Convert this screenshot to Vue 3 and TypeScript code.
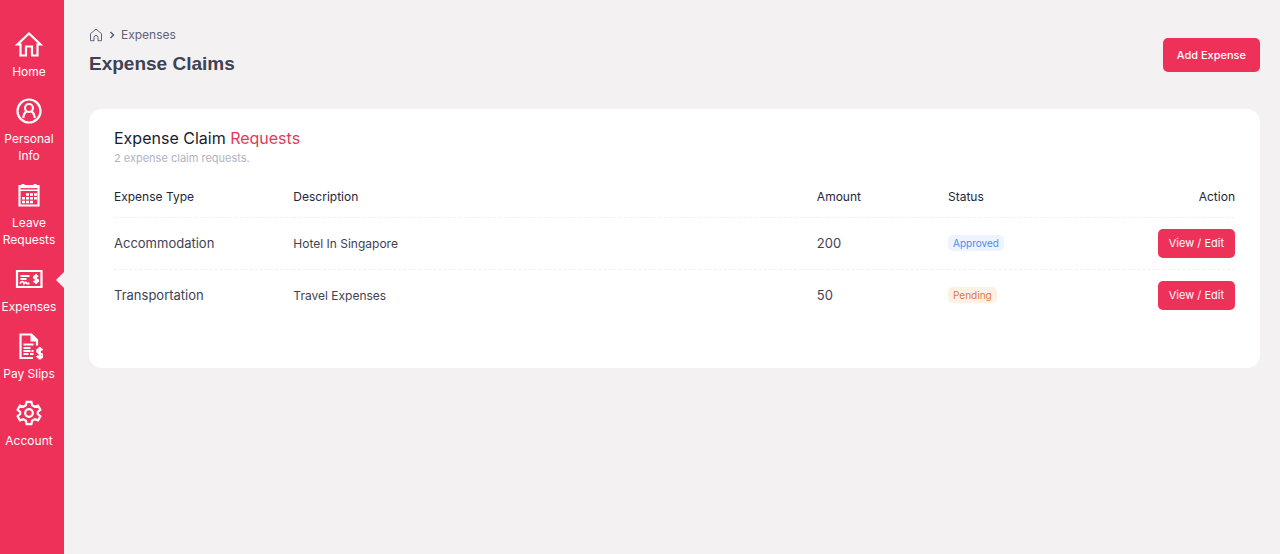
<script setup lang="ts">
type IconName = 'home' | 'person' | 'calendar' | 'cheque' | 'payslip' | 'gear'

interface NavItem {
  icon: IconName
  label: string
  active?: boolean
}

interface Claim {
  type: string
  description: string
  amount: number
  status: 'Approved' | 'Pending'
}

const navItems: NavItem[] = [
  { icon: 'home', label: 'Home' },
  { icon: 'person', label: 'Personal Info' },
  { icon: 'calendar', label: 'Leave Requests' },
  { icon: 'cheque', label: 'Expenses', active: true },
  { icon: 'payslip', label: 'Pay Slips' },
  { icon: 'gear', label: 'Account' },
]

const claims: Claim[] = [
  { type: 'Accommodation', description: 'Hotel In Singapore', amount: 200, status: 'Approved' },
  { type: 'Transportation', description: 'Travel Expenses', amount: 50, status: 'Pending' },
]
</script>

<template>
  <div class="shell">
    <nav class="sidebar" aria-label="Main">
      <a
        v-for="item in navItems"
        :key="item.label"
        href="#"
        class="nav-item"
        :class="{ active: item.active }"
        :aria-current="item.active ? 'page' : undefined"
      >
        <svg class="nav-icon" viewBox="0 0 28 28" aria-hidden="true">
          <g v-if="item.icon === 'home'" class="line">
            <path d="M5.500 14.500H2.500L14 3.500l11.500 11h-3" />
            <path d="M5.500 13.500V25.500H11V16.500h6v9h5.500V13.500" />
          </g>
          <g v-else-if="item.icon === 'person'" class="line">
            <circle cx="14" cy="14" r="11.500" />
            <circle cx="14" cy="11" r="4" />
            <path d="M8.300 21c.2-3.300 1.200-5.300 3.200-6.500M19.700 21c-.2-3.300-1.200-5.300-3.200-6.500" />
          </g>
          <g v-else-if="item.icon === 'calendar'">
            <path class="line" d="M4.500 5h19v19.500h-19z" />
            <path class="solid" d="M4 4h20v6H4z" />
            <path class="cut" d="M5.500 7.800h17" />
            <path class="solid" d="M6.500 3h3v3h-3zM18.500 3h3v3h-3z" />
            <path class="dots" d="M11 13.500h11M7 17.300h15M7 21h11" />
          </g>
          <g v-else-if="item.icon === 'cheque'">
            <path class="line" d="M2 6h24.500v16H2z" />
            <path class="thin" d="M5.500 11h9M5.500 14h6M5 18.500c2-3 3.500-2 4 0 1-1.500 2-1.200 3 0h2.500" />
            <path class="bold" d="M23 11.900c-1-1.400-4.200-1.300-4.200.4 0 2 4.400 1.300 4.400 3.300 0 1.800-3.500 1.800-4.600.3M21 9v10" />
          </g>
          <g v-else-if="item.icon === 'payslip'">
            <path class="line" d="M18 26H5.500V2.500h11l5.500 5.500v5.500" />
            <path class="solid" d="M15.500 2v7.500H23z" />
            <path class="thin" d="M8.500 12.500h10M8.500 16h7M8.500 19h7M8.500 22h5M16.500 19h2M15 22h3.500" />
            <path class="line" d="M27.600 18.300c-1.400-2-5.400-1.600-5.400.6 0 3 5.500 1.800 5.500 4.700 0 2.500-4.500 2.600-5.800.3M24.800 15v12.500" />
          </g>
          <g v-else class="line">
            <circle cx="14" cy="14" r="3.800" />
            <path d="M11.600 2.800h4.800l.7 3.400 2.600 1.500 3.300-1.100 2.400 4.100-2.600 2.300v2l2.600 2.300-2.400 4.100-3.300-1.100-2.600 1.500-.7 3.400h-4.800l-.7-3.400-2.600-1.500L5 21.400l-2.400-4.100L5.200 15v-2l-2.600-2.300L5 6.600l3.300 1.100 2.600-1.500z" />
          </g>
        </svg>
        <span class="nav-label">{{ item.label }}</span>
      </a>
    </nav>

    <main class="content">
      <header class="page-head">
        <div>
          <div class="crumbs">
            <a href="#" class="crumb-home" aria-label="Home">
              <svg viewBox="0 0 14 14" aria-hidden="true">
                <path d="M1.500 5.700 7 1l5.500 4.700v7H9V9.500a2 2 0 0 0-4 0v3.200H1.500z" />
              </svg>
            </a>
            <svg class="chevron" viewBox="0 0 6 8" aria-hidden="true"><path d="m1.500 1 3 3-3 3" /></svg>
            <span>Expenses</span>
          </div>
          <h1>Expense Claims</h1>
        </div>
        <button type="button" class="btn btn-large">Add Expense</button>
      </header>

      <section class="card">
        <h2>Expense Claim <span>Requests</span></h2>
        <p class="summary">{{ claims.length }} expense claim requests.</p>
        <table>
          <colgroup>
            <col class="c-type" />
            <col class="c-desc" />
            <col class="c-amount" />
            <col class="c-status" />
            <col />
          </colgroup>
          <thead>
            <tr>
              <th scope="col">Expense Type</th>
              <th scope="col">Description</th>
              <th scope="col">Amount</th>
              <th scope="col">Status</th>
              <th scope="col" class="end">Action</th>
            </tr>
          </thead>
          <tbody>
            <tr v-for="claim in claims" :key="claim.type">
              <td class="strong">{{ claim.type }}</td>
              <td>{{ claim.description }}</td>
              <td class="strong">{{ claim.amount }}</td>
              <td><span class="badge" :class="claim.status.toLowerCase()">{{ claim.status }}</span></td>
              <td class="end"><button type="button" class="btn">View / Edit</button></td>
            </tr>
          </tbody>
        </table>
      </section>
    </main>
  </div>
</template>

<style>
body {
  margin: 0;
  background: #f3f1f2;
}
</style>

<style scoped>
.shell {
  display: flex;
  min-height: 100vh;
  font-family: Inter, "Liberation Sans", sans-serif;
  font-size: 11px;
  color: #3f4254;
}
.sidebar {
  flex: 0 0 58px;
  display: flex;
  flex-direction: column;
  gap: 17px;
  padding: 30px 6px 0 0;
  background: #ee3158;
}
.nav-item {
  position: relative;
  display: flex;
  flex-direction: column;
  align-items: center;
  gap: 5px;
  color: #fff;
  text-align: center;
  text-decoration: none;
}
.nav-item.active::after {
  content: "";
  position: absolute;
  top: 7px;
  right: -6px;
  border: solid transparent;
  border-width: 8px 8px 8px 0;
  border-right-color: #f3f1f2;
}
.nav-icon {
  width: 28px;
  height: 28px;
  fill: none;
  stroke: #fff;
}
.line {
  stroke-width: 2.2;
}
.thin {
  stroke-width: 1.8;
}
.bold {
  stroke-width: 2;
}
.solid {
  fill: #fff;
  stroke: none;
}
.cut {
  stroke: #ee3158;
  stroke-width: 1.400;
}
.dots {
  stroke-width: 2.6;
  stroke-dasharray: 3 1;
}
.nav-label {
  font-size: 12px;
  line-height: 17px;
}
.content {
  flex: 1;
  min-width: 0;
  padding: 27px 20px 27px 25px;
}
.page-head {
  display: flex;
  justify-content: space-between;
  align-items: flex-end;
  margin-bottom: 33px;
}
.crumbs {
  display: flex;
  align-items: center;
  gap: 6px;
  height: 15px;
  font-size: 12px;
  color: #5e6278;
}
.crumb-home,
.crumb-home svg {
  display: block;
  width: 14px;
  height: 14px;
}
.crumb-home svg,
.chevron {
  fill: none;
  stroke: #5e6278;
}
.chevron {
  width: 6px;
  height: 8px;
  stroke-width: 1.500;
}
h1 {
  margin: 10px 0 0;
  font-family: "Liberation Sans", Arial, sans-serif;
  font-size: 19px;
  line-height: 24px;
  font-weight: 700;
}
.btn {
  box-sizing: border-box;
  height: 29px;
  padding: 0 11px;
  border: 0;
  border-radius: 5px;
  background: #ee3158;
  color: #fff;
  font: inherit;
  white-space: nowrap;
  cursor: pointer;
}
.btn-large {
  height: 34px;
  margin-bottom: 4px;
  padding: 0 14px;
  font-weight: 500;
}
.card {
  padding: 19px 25px 47px;
  border-radius: 13px;
  background: #fff;
}
h2 {
  margin: 0;
  font-size: 16px;
  line-height: 20px;
  font-weight: 400;
  color: #181c32;
}
h2 span {
  color: #e33a5c;
}
.summary {
  margin: 3px 0 21px;
  line-height: 14px;
  color: #b0b3c2;
}
table {
  width: 100%;
  table-layout: fixed;
  border-collapse: collapse;
  font-size: 12px;
}
.c-type {
  width: 16%;
}
.c-desc {
  width: 46.7%;
}
.c-amount {
  width: 11.7%;
}
.c-status {
  width: 12.5%;
}
th,
td {
  padding: 0;
  text-align: left;
  vertical-align: middle;
}
th {
  height: 31px;
  padding-bottom: 10px;
  box-sizing: border-box;
  font-weight: 400;
  color: #24273a;
}
td {
  height: 51px;
  border-top: 1px dashed #f0f0f3;
}
td .btn {
  font-size: 11px;
}
.strong {
  font-size: 13px;
}
th.end,
td.end {
  text-align: right;
}
.badge {
  display: inline-block;
  padding: 0 5px;
  border-radius: 5px;
  font-size: 10px;
  line-height: 16px;
}
.approved {
  background: #eef3ff;
  color: #4a8df0;
}
.pending {
  background: #fff0e4;
  color: #dc7a42;
}
</style>
